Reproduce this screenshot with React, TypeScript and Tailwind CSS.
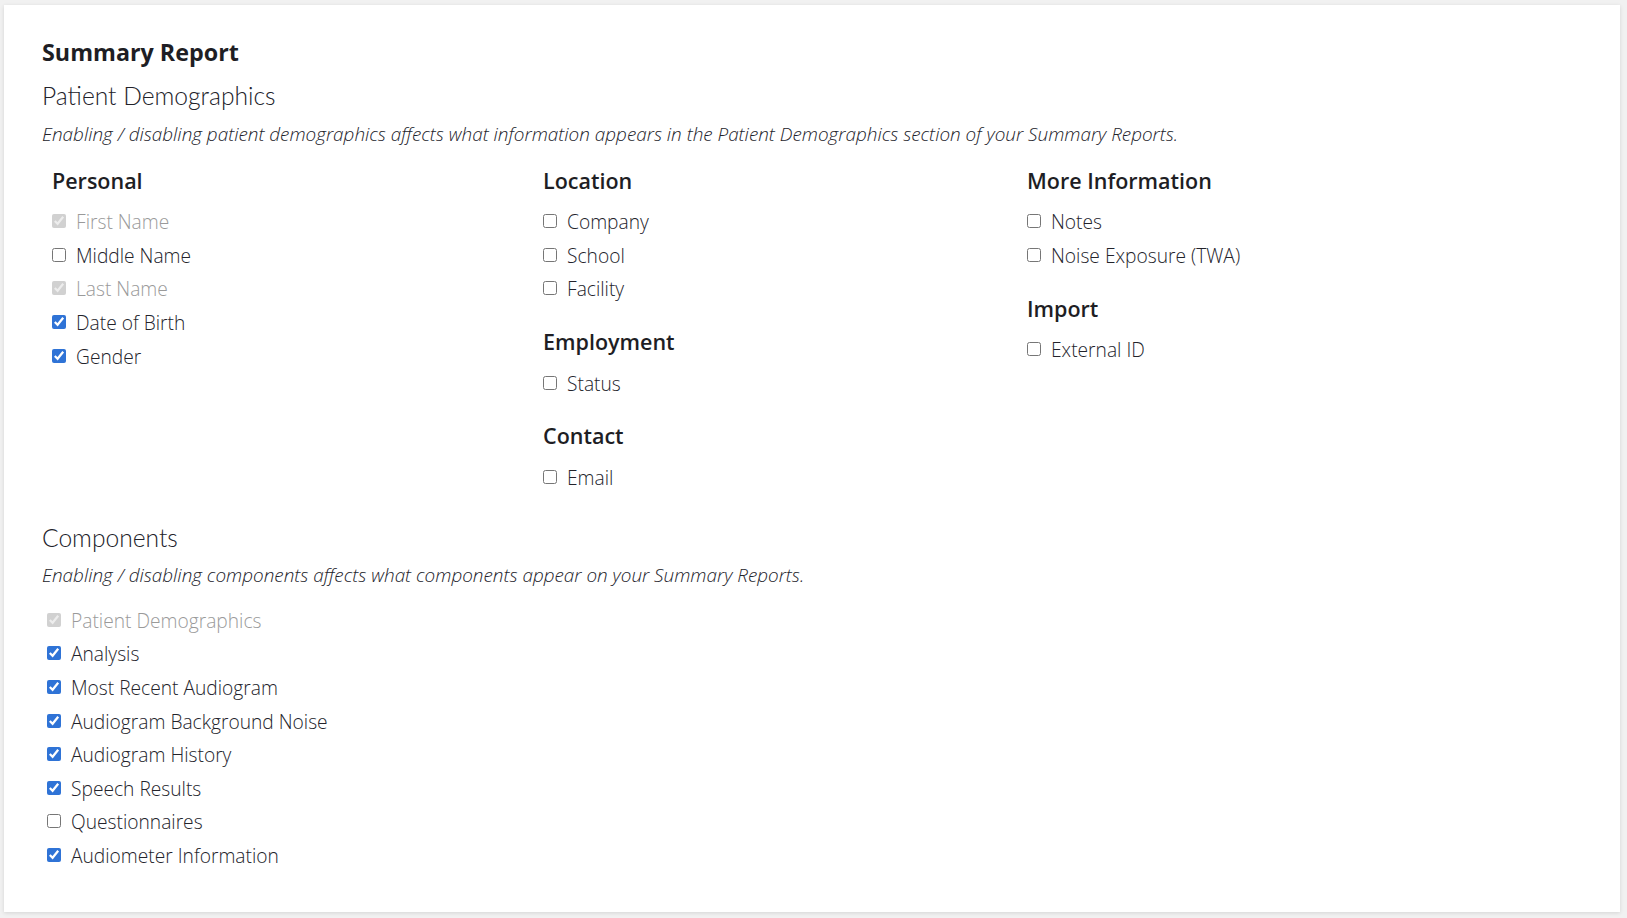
import { useState } from "react";

type Item = { label: string; checked: boolean; disabled?: boolean };
type Group = { title: string; items: Item[] };

const columns: Group[][] = [
  [
    {
      title: "Personal",
      items: [
        { label: "First Name", checked: true, disabled: true },
        { label: "Middle Name", checked: false },
        { label: "Last Name", checked: true, disabled: true },
        { label: "Date of Birth", checked: true },
        { label: "Gender", checked: true },
      ],
    },
  ],
  [
    {
      title: "Location",
      items: [
        { label: "Company", checked: false },
        { label: "School", checked: false },
        { label: "Facility", checked: false },
      ],
    },
    { title: "Employment", items: [{ label: "Status", checked: false }] },
    { title: "Contact", items: [{ label: "Email", checked: false }] },
  ],
  [
    {
      title: "More Information",
      items: [
        { label: "Notes", checked: false },
        { label: "Noise Exposure (TWA)", checked: false },
      ],
    },
    { title: "Import", items: [{ label: "External ID", checked: false }] },
  ],
];

const componentItems: Item[] = [
  { label: "Patient Demographics", checked: true, disabled: true },
  { label: "Analysis", checked: true },
  { label: "Most Recent Audiogram", checked: true },
  { label: "Audiogram Background Noise", checked: true },
  { label: "Audiogram History", checked: true },
  { label: "Speech Results", checked: true },
  { label: "Questionnaires", checked: false },
  { label: "Audiometer Information", checked: true },
];

function CheckRow({ item }: { item: Item }) {
  const [checked, setChecked] = useState(item.checked);
  return (
    <label className="flex items-center gap-[10px] h-[33.6px]">
      <input
        type="checkbox"
        checked={checked}
        disabled={item.disabled}
        onChange={(e) => setChecked(e.target.checked)}
        className="w-[14px] h-[14px] m-0 -mt-[2px] accent-[#2f73d6]"
      />
      <span
        className={`text-[19.2px] leading-[26px] font-light ${
          item.disabled ? "text-[#9a9a9a]" : "text-[#23232b]"
        }`}
      >
        {item.label}
      </span>
    </label>
  );
}

export default function App() {
  return (
    <div
      className="min-h-screen bg-[#f1f1f1] pt-[5px] pl-[4px] pr-[7px] pb-[6px]"
      style={{ fontFamily: '"Open Sans", "Liberation Sans", sans-serif' }}
    >
      <div className="bg-white h-[907px] px-[38px] pt-[31px] shadow-[0_1px_4px_rgba(0,0,0,0.12)]">
        <h1 className="text-[23.3px] leading-[32px] font-bold text-[#1e1e24]">
          Summary Report
        </h1>

        {/* Patient Demographics */}
        <h2
          className="mt-[12px] text-[24.6px] leading-[32px] font-light text-[#22222a]"
          style={{ fontFamily: 'Lato, "Open Sans", sans-serif' }}
        >
          Patient Demographics
        </h2>
        <p className="mt-[9px] text-[18.9px] leading-[26px] italic font-light text-[#23232b]">
          Enabling / disabling patient demographics affects what information appears in the
          Patient Demographics section of your Summary Reports.
        </p>

        <div className="ml-[10px] mt-[19px] grid grid-cols-[491px_484px_1fr]">
          {columns.map((col, i) => (
            <div key={i} className="flex flex-col gap-[21px]">
              {col.map((group) => (
                <div key={group.title}>
                  <h3 className="text-[21.5px] leading-[30px] font-semibold text-[#1e1e24] mb-[9.5px]">
                    {group.title}
                  </h3>
                  {group.items.map((item) => (
                    <CheckRow key={item.label} item={item} />
                  ))}
                </div>
              ))}
            </div>
          ))}
        </div>

        {/* Components */}
        <h2
          className="mt-[27.5px] text-[24.6px] leading-[32px] font-light text-[#22222a]"
          style={{ fontFamily: 'Lato, "Open Sans", sans-serif' }}
        >
          Components
        </h2>
        <p className="mt-[8px] text-[18.9px] leading-[26px] italic font-light text-[#23232b]">
          Enabling / disabling components affects what components appear on your Summary Reports.
        </p>
        <div className="ml-[5px] mt-[16px]">
          {componentItems.map((item) => (
            <CheckRow key={item.label} item={item} />
          ))}
        </div>
      </div>
    </div>
  );
}
